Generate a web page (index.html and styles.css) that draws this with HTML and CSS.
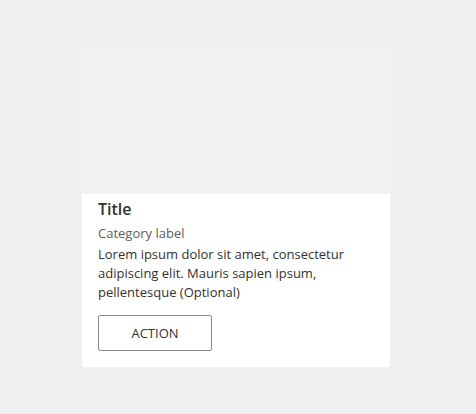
FILE: index.html
```html
<!DOCTYPE html>
<html lang="en">
<head>
    <meta charset="UTF-8">
    <meta name="viewport" content="width=device-width, initial-scale=1.0">
    <title>Card</title>
    <link rel="stylesheet" href="styles.css">
</head>
<body>
    <main class="page">
        <article class="card">
            <div class="card-media"></div>
            <div class="card-body">
                <h2 class="card-title">Title</h2>
                <p class="card-category">Category label</p>
                <p class="card-text">Lorem ipsum dolor sit amet, consectetur adipiscing elit. Mauris sapien ipsum, pellentesque (Optional)</p>
                <button type="button" class="card-action">ACTION</button>
            </div>
        </article>
    </main>
</body>
</html>
```

FILE: styles.css
```css
:root {
    --fundo: #f0f0f0;
    --midia: #f2f2f2;
    --branco: #ffffff;
    --texto: #323130;
    --texto-suave: #605e5c;
    --borda: #8a8886;
}

body {
    margin: 0;
    background-color: var(--fundo);
    font-family: 'Open Sans', 'Noto Sans', sans-serif;
    color: var(--texto);
}

.page {
    padding: 52px 0 0 82px;
}

.card {
    width: 308px;
    background-color: var(--branco);
    border-radius: 4px;
    overflow: hidden;
}

.card-media {
    height: 142px;
    background-color: var(--midia);
}

.card-body {
    padding: 3px 16px 16px;
}

.card-title {
    margin: 0;
    font-size: 16px;
    font-weight: 600;
    line-height: 24px;
}

.card-category {
    margin: 3px 0 0;
    font-size: 13px;
    line-height: 18px;
    color: var(--texto-suave);
}

.card-text {
    margin: 3px 0 0;
    font-size: 13px;
    line-height: 19px;
}

.card-action {
    margin-top: 13px;
    width: 114px;
    height: 36px;
    background: var(--branco);
    border: 1px solid var(--borda);
    border-radius: 2px;
    font-family: inherit;
    font-size: 13px;
    color: var(--texto);
    cursor: pointer;
}
```
